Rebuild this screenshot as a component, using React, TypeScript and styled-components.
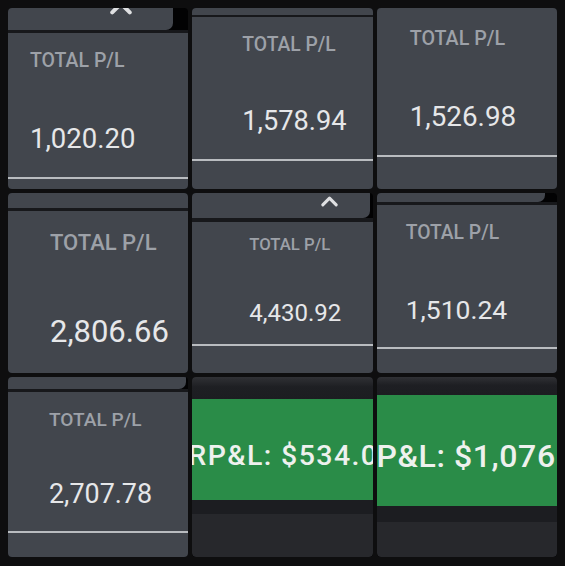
import React from "react";
import styled, { createGlobalStyle } from "styled-components";

const GlobalStyle = createGlobalStyle`
  html, body {
    margin: 0;
    padding: 0;
    background: #0e0e0f;
  }
  body {
    font-family: Roboto, "Liberation Sans", sans-serif;
  }
`;

type Strip = {
  h: number;
  w?: number;
  gap: number;
  chevron?: { size: number; shift: number; right: number };
};

type PLTile = {
  kind: "pl";
  value: string;
  strip?: Strip;
  indent: number;
  label: number;
  size: number;
  labelCap: number;
  valueCap: number;
  lineAt?: number;
};

type GreenTile = {
  kind: "green";
  text: string;
  top: number;
  band: number;
  under: number;
  size: number;
  spacing: number;
  shift: number;
  drop: number;
};

const tiles: (PLTile | GreenTile)[] = [
  {
    kind: "pl",
    value: "1,020.20",
    strip: { h: 22, w: 165, gap: 3, chevron: { size: 30, shift: -15, right: 37 } },
    indent: 22,
    label: 19.5,
    size: 27.5,
    labelCap: 21,
    valueCap: 96,
    lineAt: 144,
  },
  {
    kind: "pl",
    value: "1,578.94",
    strip: { h: 7, gap: 2 },
    indent: 50,
    label: 19.3,
    size: 27.2,
    labelCap: 21,
    valueCap: 95,
    lineAt: 142,
  },
  {
    kind: "pl",
    value: "1,526.98",
    indent: 33,
    label: 19.7,
    size: 27.8,
    labelCap: 24,
    valueCap: 99,
    lineAt: 147,
  },
  {
    kind: "pl",
    value: "2,806.66",
    strip: { h: 15, gap: 3 },
    indent: 42,
    label: 22,
    size: 31,
    labelCap: 24,
    valueCap: 109,
  },
  {
    kind: "pl",
    value: "4,430.92",
    strip: { h: 25, w: 178, gap: 4, chevron: { size: 23, shift: -3, right: 29 } },
    indent: 57,
    label: 16.7,
    size: 24,
    labelCap: 17,
    valueCap: 82,
    lineAt: 122,
  },
  {
    kind: "pl",
    value: "1,510.24",
    strip: { h: 9, w: 168, gap: 3 },
    indent: 29,
    label: 19.3,
    size: 26.5,
    labelCap: 21,
    valueCap: 95,
    lineAt: 142,
  },
  {
    kind: "pl",
    value: "2,707.78",
    strip: { h: 12, w: 178, gap: 3 },
    indent: 41,
    label: 19.1,
    size: 26.9,
    labelCap: 20,
    valueCap: 93,
    lineAt: 139,
  },
  {
    kind: "green",
    text: "RP&L: $534.00",
    top: 22,
    band: 101,
    under: 14,
    size: 28.5,
    spacing: 1.4,
    shift: -4,
    drop: 13,
  },
  {
    kind: "green",
    text: "RP&L: $1,076.55",
    top: 18,
    band: 111,
    under: 16,
    size: 32,
    spacing: 0.6,
    shift: -21,
    drop: 10,
  },
];

// roboto: with line-height 1 the cap top sits ~0.13em below the box top
const CAP = 0.13;

const App = () => {
  return (
    <>
      <GlobalStyle />
      <Page>
        <TopStrip>
          <Ghost>nnnnn</Ghost>
        </TopStrip>
        <Grid>
          {tiles.map((t, i) =>
            t.kind === "pl" ? (
              <PLCell key={i} tile={t} />
            ) : (
              <GreenCell key={i} tile={t} />
            )
          )}
        </Grid>
      </Page>
    </>
  );
};

const PLCell = ({ tile }: { tile: PLTile }) => {
  const labelTop = tile.labelCap - CAP * tile.label;
  const valueTop = tile.valueCap - CAP * tile.size;
  const valueGap = valueTop - (labelTop + tile.label);
  const ruleGap =
    tile.lineAt !== undefined ? tile.lineAt - (valueTop + tile.size) : 0;

  return (
    <Cell>
      {tile.strip && (
        <>
          <TopPanel $h={tile.strip.h} $w={tile.strip.w}>
            {tile.strip.chevron && (
              <Chevron
                $size={tile.strip.chevron.size}
                $shift={tile.strip.chevron.shift}
                $right={tile.strip.chevron.right}
                viewBox="0 0 24 24"
              >
                <path d="M5 15.5 L12 8.5 L19 15.5" />
              </Chevron>
            )}
          </TopPanel>
          <Seam $h={tile.strip.gap} />
        </>
      )}
      <Card>
        <Label $size={tile.label} $top={labelTop} $indent={tile.indent}>
          TOTAL P/L
        </Label>
        <Value $size={tile.size} $top={valueGap} $indent={tile.indent}>
          {tile.value}
        </Value>
        {tile.lineAt !== undefined && <Rule $top={ruleGap} />}
      </Card>
    </Cell>
  );
};

const GreenCell = ({ tile }: { tile: GreenTile }) => {
  return (
    <Cell>
      <DarkHead $h={tile.top} />
      <GreenBand $h={tile.band}>
        <BandText
          $size={tile.size}
          $spacing={tile.spacing}
          $shift={tile.shift}
          $drop={tile.drop}
        >
          {tile.text}
        </BandText>
      </GreenBand>
      <DarkBand $h={tile.under} />
      <Footer />
    </Cell>
  );
};

export default App;

const Page = styled.div`
  width: 565px;
  height: 566px;
  padding: 0 8px;
  box-sizing: border-box;
  background: #0e0e0f;
  overflow: hidden;
`;

const TopStrip = styled.div`
  height: 8px;
  overflow: hidden;
  padding-left: 16px;
`;

const Ghost = styled.div`
  margin-top: -9px;
  font-size: 11px;
  line-height: 11px;
  letter-spacing: 1px;
  color: #5b5e63;
`;

const Grid = styled.div`
  display: grid;
  grid-template-columns: repeat(3, 1fr);
  grid-template-rows: 181px 180px 180px;
  gap: 4px;
`;

const Cell = styled.div`
  display: flex;
  flex-direction: column;
  background: #020203;
  border-radius: 4px;
  overflow: hidden;
  min-width: 0;
`;

const TopPanel = styled.div<{ $h: number; $w?: number }>`
  flex: none;
  display: flex;
  justify-content: flex-end;
  align-items: flex-start;
  height: ${(p) => p.$h}px;
  width: ${(p) => (p.$w ? `${p.$w}px` : "100%")};
  background: #42464d;
  border-radius: 0 0 ${(p) => (p.$w ? 7 : 0)}px 0;
  overflow: hidden;
`;

const Chevron = styled.svg<{ $size: number; $shift: number; $right: number }>`
  flex: none;
  width: ${(p) => p.$size}px;
  height: ${(p) => p.$size}px;
  margin-top: ${(p) => p.$shift}px;
  margin-right: ${(p) => p.$right}px;
  fill: none;
  stroke: #dfe0e2;
  stroke-width: 3.2;
  stroke-linecap: round;
  stroke-linejoin: round;
`;

const Seam = styled.div<{ $h: number }>`
  flex: none;
  height: ${(p) => p.$h}px;
  background: #17181b;
`;

const Card = styled.div`
  flex: 1;
  display: flex;
  flex-direction: column;
  background: #42464d;
  min-height: 0;
`;

const Label = styled.div<{ $size: number; $top: number; $indent: number }>`
  margin-top: ${(p) => p.$top}px;
  padding-left: ${(p) => p.$indent}px;
  font-size: ${(p) => p.$size}px;
  line-height: 1;
  font-weight: 500;
  color: #9da1a8;
  white-space: nowrap;
`;

const Value = styled.div<{ $size: number; $top: number; $indent: number }>`
  margin-top: ${(p) => p.$top}px;
  padding-left: ${(p) => p.$indent}px;
  font-size: ${(p) => p.$size}px;
  line-height: 1;
  font-weight: 400;
  color: #e6e7e9;
  white-space: nowrap;
`;

const Rule = styled.div<{ $top: number }>`
  flex: none;
  margin-top: ${(p) => p.$top}px;
  height: 2px;
  background: #b9bcc0;
`;

const DarkHead = styled.div<{ $h: number }>`
  flex: none;
  height: ${(p) => p.$h}px;
  background: linear-gradient(#303135 0%, #1e1f23 45%, #1c1d21 100%);
`;

const GreenBand = styled.div<{ $h: number }>`
  flex: none;
  display: flex;
  align-items: center;
  height: ${(p) => p.$h}px;
  background: #2a8c48;
  overflow: hidden;
`;

const BandText = styled.div<{
  $size: number;
  $spacing: number;
  $shift: number;
  $drop: number;
}>`
  margin-left: ${(p) => p.$shift}px;
  padding-top: ${(p) => p.$drop}px;
  font-size: ${(p) => p.$size}px;
  letter-spacing: ${(p) => p.$spacing}px;
  line-height: 1;
  font-weight: 500;
  color: #eef1ee;
  white-space: nowrap;
`;

const DarkBand = styled.div<{ $h: number }>`
  flex: none;
  height: ${(p) => p.$h}px;
  background: #1c1d21;
`;

const Footer = styled.div`
  flex: 1;
  background: #27282c;
  border-radius: 0 0 4px 4px;
`;
